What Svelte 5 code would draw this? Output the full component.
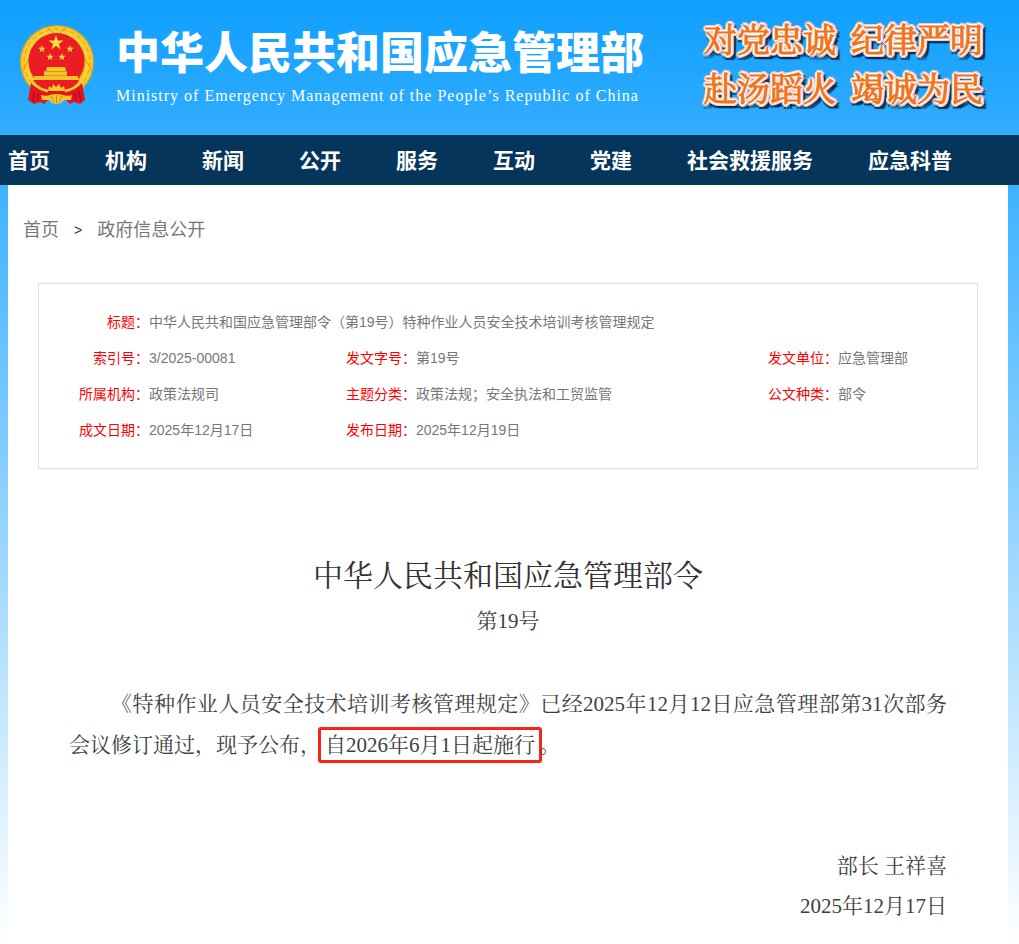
<script lang="ts">
    type Field = { label: string; value: string; span?: number };

    const navItems = ["首页", "机构", "新闻", "公开", "服务", "互动", "党建", "社会救援服务", "应急科普"];

    const slogans = [
        ["对党忠诚", "纪律严明"],
        ["赴汤蹈火", "竭诚为民"],
    ];

    const rows: Field[][] = [
        [
            {
                label: "标题",
                value: "中华人民共和国应急管理部令（第19号）特种作业人员安全技术培训考核管理规定",
                span: 5,
            },
        ],
        [
            { label: "索引号", value: "3/2025-00081" },
            { label: "发文字号", value: "第19号" },
            { label: "发文单位", value: "应急管理部" },
        ],
        [
            { label: "所属机构", value: "政策法规司" },
            { label: "主题分类", value: "政策法规；安全执法和工贸监管" },
            { label: "公文种类", value: "部令" },
        ],
        [
            { label: "成文日期", value: "2025年12月17日" },
            { label: "发布日期", value: "2025年12月19日", span: 3 },
        ],
    ];

    const star = "M0 -10 L2.3 -3.1 L9.5 -3.1 L3.7 1.2 L5.9 8.1 L0 3.8 L-5.9 8.1 L-3.7 1.2 L-9.5 -3.1 L-2.3 -3.1Z";
    const stars = [
        { x: 36, y: 18, scale: 0.8 },
        { x: 22, y: 24, scale: 0.4 },
        { x: 50, y: 24, scale: 0.4 },
        { x: 30, y: 32, scale: 0.4 },
        { x: 42, y: 32, scale: 0.4 },
    ];
</script>

<div class="site">
    <header class="banner">
        <svg class="emblem" viewBox="0 0 75 80" aria-hidden="true">
            <circle cx="37" cy="37" r="37" fill="#e3aa1c" />
            <circle cx="37" cy="37" r="32" fill="none" stroke="#f8d032" stroke-width="7" />
            <circle cx="37" cy="37" r="33" fill="none" stroke="#d79c17" stroke-width="1" stroke-dasharray="5 3" />
            <path d="M2 47 L12 27 M72 47 L62 27 M27 2 L34 8 M47 2 L40 8" stroke="#d79c17" stroke-width="1" />
            <circle cx="36.5" cy="36" r="28" fill="#ec1c24" />
            <path d="M11 58 L8 75 L14 79 L20 77 L24 79 L30 73 L44 73 L50 79 L54 77 L60 79 L65 75 L62 58 C55 66 45 66 37 66 C28 66 18 66 11 58Z" fill="#e3131f" />
            <path d="M14 66 L13 77 M18 68 L18 76 M59 66 L61 77 M55 68 L56 76" stroke="#a90d18" stroke-width="1" />
            {#each stars as s}
                <path d={star} transform="translate({s.x} {s.y}) scale({s.scale})" fill="#fddc38" />
            {/each}
            <path d="M27 42 H45 L46 46 H47 V51 H58 V55 H14 V51 H24 V46 H26Z" fill="#f3c52b" />
            <path d="M25 46.5 H47 M24 50.5 H47" stroke="#d79c17" stroke-width="1" />
            <path d="M13 55 H59 C57 61 52 65 45 66 L42 62 H31 L28 66 C21 65 16 61 13 55Z" fill="#ec1c24" />
            <path d="M12 56 C17 63 22 65 28 66 M61 56 C56 63 51 65 45 66" fill="none" stroke="#f3c52b" stroke-width="3" />
            <path d="M28 66 L29 61 L32 63 L33 59 L36 62 L39 59 L41 63 L44 61 L45 66Z" fill="#f7cd2d" />
            <path d="M21 70 C27 72 31 69 36 69 C42 69 46 72 52 70 L51 75 L44 75 L41 78 L36 79 L32 78 L29 75 L22 75Z" fill="#f3c52b" />
            <path d="M31 71 L34 77 M36.5 70 V78 M42 71 L39 77" stroke="#c98c12" stroke-width="1" />
        </svg>
        <div class="banner__name">
            <h1>中华人民共和国应急管理部</h1>
            <p>Ministry of Emergency Management of the People’s Republic of China</p>
        </div>
        <div class="slogan">
            {#each slogans as [left, right]}
                <p><span>{left}</span><span>{right}</span></p>
            {/each}
        </div>
    </header>

    <nav class="nav">
        {#each navItems as item}
            <a href="#top">{item}</a>
        {/each}
    </nav>

    <main class="page">
        <nav class="crumbs" aria-label="当前位置">
            <a href="#top">首页</a>
            <span>&gt;</span>
            <a href="#top">政府信息公开</a>
        </nav>

        <div class="info">
            <table>
                <colgroup>
                    <col class="col-first" />
                    <col class="col-value" />
                    <col class="col-label" />
                    <col />
                    <col class="col-label" />
                    <col class="col-last" />
                </colgroup>
                <tbody>
                    {#each rows as row}
                        <tr>
                            {#each row as field (field.label)}
                                <th scope="row">{field.label}：</th>
                                <td colspan={field.span ?? 1}>{field.value}</td>
                            {/each}
                        </tr>
                    {/each}
                </tbody>
            </table>
        </div>

        <article class="decree">
            <h2>中华人民共和国应急管理部令</h2>
            <p class="decree__number">第19号</p>
            <p class="decree__body">
                《特种作业人员安全技术培训考核管理规定》已经2025年12月12日应急管理部第31次部务会议修订通过，现予公布，<mark>自2026年6月1日起施行</mark>。
            </p>
            <footer class="decree__sign">
                <p>部长 王祥喜</p>
                <p>2025年12月17日</p>
            </footer>
        </article>
    </main>
</div>

<style>
    :global(body) {
        margin: 0;
    }

    .site {
        min-height: 100vh;
        background: linear-gradient(#0f9fff, #ffffff);
        font-family: "Liberation Sans", "Noto Sans CJK SC", sans-serif;
    }

    h1,
    h2,
    p {
        margin: 0;
        font-weight: 400;
    }

    a {
        color: inherit;
        text-decoration: none;
    }

    .banner {
        display: flex;
        align-items: flex-start;
        box-sizing: border-box;
        height: 135px;
        padding: 13px 36px 0 20px;
        white-space: nowrap;
    }

    .emblem {
        flex: none;
        width: 75px;
        height: 80px;
        margin: 12px 21px 0 0;
    }

    .banner__name {
        padding-top: 2px;
        color: #ffffff;
    }

    .banner__name h1 {
        font-family: "Noto Sans CJK SC", sans-serif;
        font-size: 44px;
        font-weight: 900;
        line-height: 70px;
    }

    .banner__name p {
        font-family: "Liberation Serif", serif;
        font-size: 16px;
        letter-spacing: 1px;
        line-height: 22px;
    }

    .slogan {
        margin-left: auto;
        color: #f0731a;
        font-family: "Noto Serif CJK SC", "Noto Sans CJK SC", serif;
        font-size: 33px;
        font-weight: 900;
        line-height: 49px;
        -webkit-text-stroke: 1px #f0731a;
        text-shadow:
            1px 1px #ffffff,
            -1px 1px #ffffff,
            1px -1px #ffffff,
            -1px -1px #ffffff,
            2px 0 #ffffff,
            -2px 0 #ffffff,
            0 2px #ffffff,
            0 -2px #ffffff,
            3px 1px #f8c6c2,
            -3px 1px #f8c6c2,
            3px -1px #f8c6c2,
            -3px -1px #f8c6c2,
            1px 3px #f8c6c2,
            -1px 3px #f8c6c2,
            1px -3px #f8c6c2,
            -1px -3px #f8c6c2,
            2px 2px #f8c6c2,
            -2px 2px #f8c6c2,
            2px -2px #f8c6c2,
            -2px -2px #f8c6c2,
            5px 2px 1px #06304f,
            5px 5px 1px #06304f,
            2px 5px 1px #06304f,
            -1px 5px 1px #06304f;
    }

    .slogan p {
        display: flex;
        gap: 15px;
    }

    .nav {
        display: flex;
        gap: 55px;
        padding: 0 8px 2px;
        background: #05355b;
        color: #ffffff;
        font-family: "Noto Sans CJK SC", sans-serif;
        font-size: 21px;
        font-weight: 700;
        line-height: 48px;
        white-space: nowrap;
    }

    .page {
        margin: 0 11px 0 8px;
        padding: 0 30px 18px;
        background: #ffffff;
    }

    .crumbs {
        display: flex;
        gap: 15px;
        margin: 0 -15px 8px;
        color: #777777;
        font-size: 18px;
        line-height: 90px;
    }

    .crumbs span {
        color: #333333;
        font-size: 14px;
    }

    .info {
        padding: 20px 0;
        border: 1px solid #dddddd;
        font-size: 14px;
    }

    .info table {
        width: 100%;
        table-layout: fixed;
        border-collapse: collapse;
    }

    .col-first {
        width: 110px;
    }

    .col-value {
        width: 21%;
    }

    .col-label {
        width: 70px;
    }

    .col-last {
        width: 139px;
    }

    .info th,
    .info td {
        height: 36px;
        padding: 0;
        line-height: 20px;
        white-space: nowrap;
    }

    .info th {
        color: #ff0000;
        font-weight: 400;
        text-align: right;
    }

    .info td {
        color: #777777;
    }

    .decree {
        margin-top: 82px;
        padding: 0 31px;
        color: #404040;
        font-family: "Liberation Serif", "Noto Serif CJK SC", "Noto Sans CJK SC", serif;
        font-size: 21px;
        font-weight: 300;
        line-height: 40px;
    }

    .decree h2 {
        color: #333333;
        font-size: 30px;
        line-height: 50px;
        text-align: center;
    }

    .decree__number {
        text-align: center;
    }

    .decree__body {
        margin-top: 43px;
        line-height: 41px;
        text-align: justify;
        text-indent: 2em;
    }

    .decree mark {
        margin: 0 -3px;
        padding: 3px 4px;
        border: 3px solid #fb2314;
        border-radius: 3px;
        background: none;
        color: inherit;
    }

    .decree__sign {
        margin-top: 80px;
        text-align: right;
    }
</style>
